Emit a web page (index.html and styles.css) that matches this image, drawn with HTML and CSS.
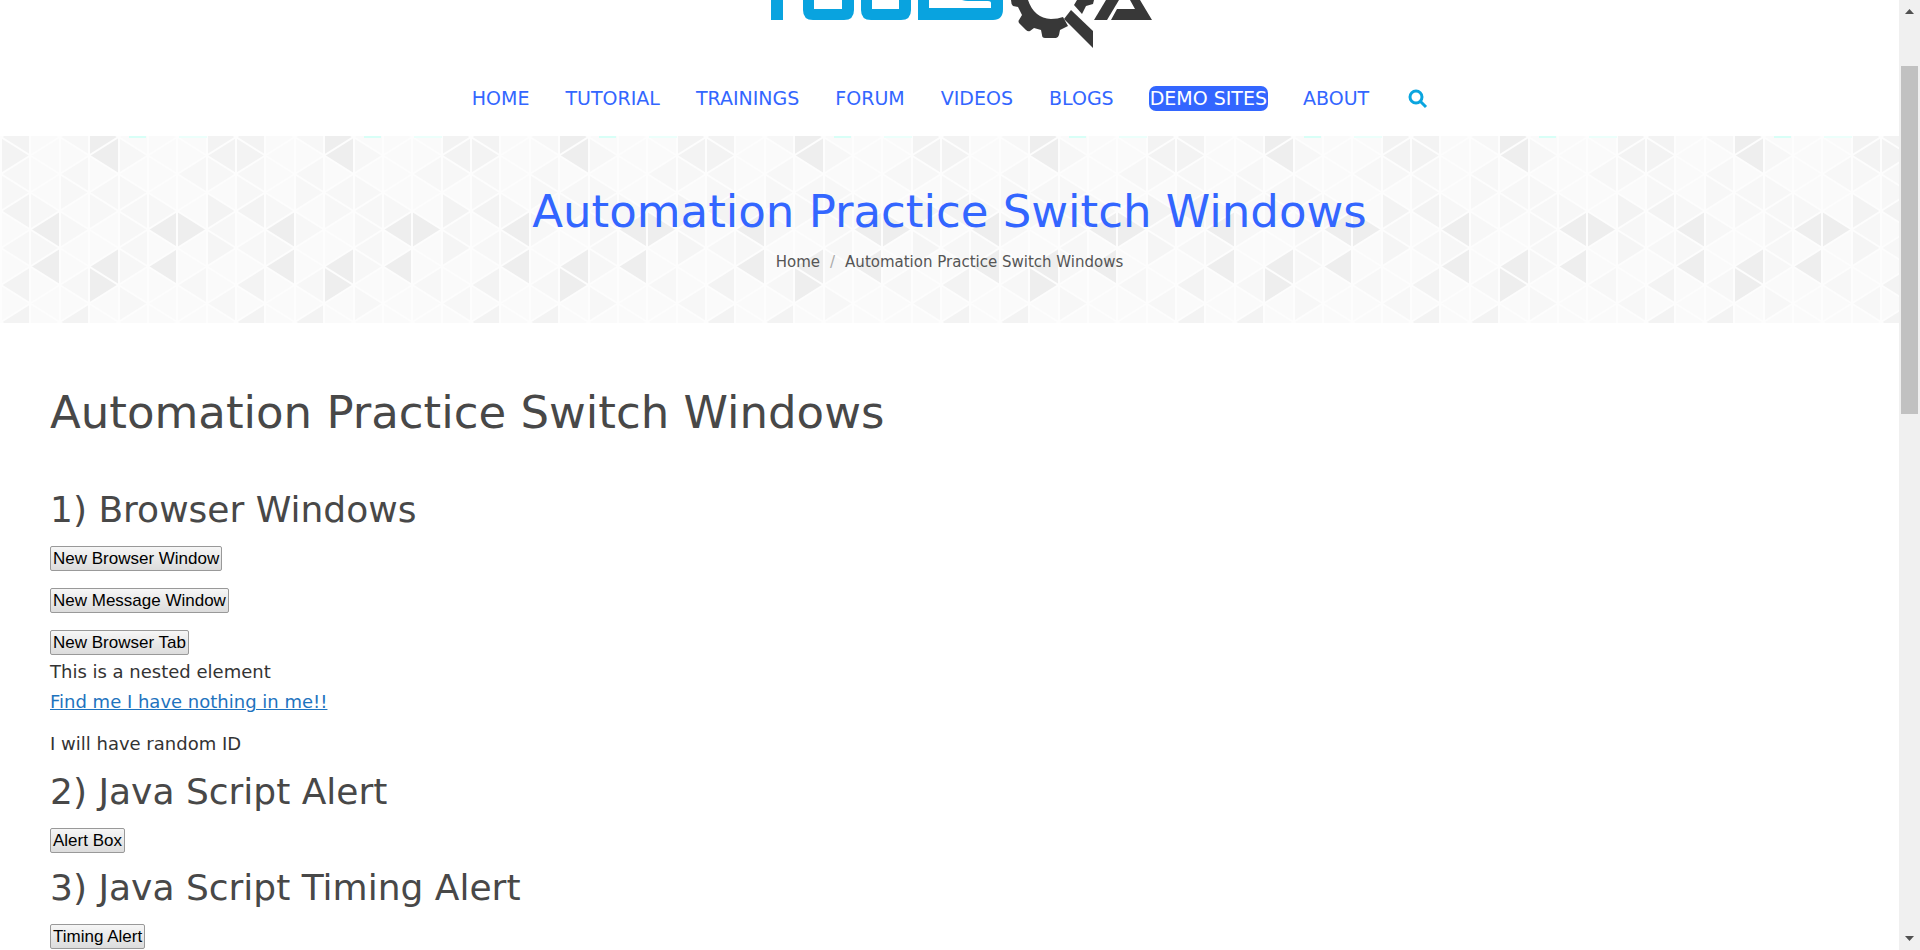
FILE: index.html
```html
<!DOCTYPE html>
<html lang="en">
<head>
<meta charset="utf-8">
<title>Automation Practice Switch Windows</title>
<link rel="stylesheet" href="styles.css">
</head>
<body>
<div class="page">
  <header class="site-header">
    <a class="logo" href="#" aria-label="ToolsQA">
      <svg width="400" height="60" viewBox="760 0 400 60" aria-hidden="true">
        <g fill="#09a3df">
          <rect x="771" y="0" width="12" height="20"/>
          <path d="M803 0h11v9h28v-9h12v10q0 10-10 10h-31q-10 0-10-10z"/>
          <path d="M861 0h11v9h27v-9h12v10q0 10-10 10h-30q-10 0-10-10z"/>
          <path d="M918 0h11v8h62v-5q0-2-3-2h-20q-3 0-6-1h41v9q0 11-10 11h-75z"/>
        </g>
        <g fill="#383838">
          <path d="M1011 0h17q6 18 23 19q7 0 12-2l5 9-8 4-1 5q-1 3-3 3h-11q-3 0-3-3l-1-5-7-2-4 3q-2 1-4-1l-7-7q-1-2 0-3l3-5-4-8-5-1q-2-2-2-6z"/>
          <path d="M1071 10l22 21v17l-29-29z"/>
          <path d="M1074 5l3-5h17l-1 4-7 2-4 8z"/>
          <path d="M1106 0h13l-12 20h-13z"/>
          <path d="M1130 0h10l12 20h-41l6-11h18z"/>
        </g>
      </svg>
    </a>
    <nav class="main-nav" aria-label="Main">
      <a class="nav-link" href="#">HOME</a>
      <a class="nav-link" href="#">TUTORIAL</a>
      <a class="nav-link" href="#">TRAININGS</a>
      <a class="nav-link" href="#">FORUM</a>
      <a class="nav-link" href="#">VIDEOS</a>
      <a class="nav-link" href="#">BLOGS</a>
      <a class="nav-link nav-link-active" href="#">DEMO SITES</a>
      <a class="nav-link" href="#">ABOUT</a>
      <button class="search" type="button" aria-label="Search">
        <svg width="20" height="20" viewBox="0 0 20 20" aria-hidden="true">
          <circle cx="8" cy="8" r="6" fill="none" stroke="#0aa5df" stroke-width="3"/>
          <path d="M12 12l6 6" stroke="#0aa5df" stroke-width="3"/>
        </svg>
      </button>
    </nav>
  </header>

  <section class="banner">
    <svg class="banner-pattern" width="100%" height="100%" aria-hidden="true">
      <defs>
        <pattern id="triangles" patternUnits="userSpaceOnUse" width="235" height="187" patternTransform="translate(1 0)">
          <rect width="235" height="187" fill="#fafafa"/>
          <g fill="#f7f7f7">
            <path d="M59 38L88 19.5V56.5zM59 38V75L88 56.5zM59 149L88 130.5V167.5zM59 75V112L88 93.5zM59 1L88 -17.5V19.5z"/>
            <path d="M88 56.5L118 38V75zM88 56.5V93.5L118 75zM118 1V38L147 19.5zM118 38V75L147 56.5zM118 75L147 56.5V93.5zM118 112L147 93.5V130.5zM118 112V149L147 130.5zM118 149V186L147 167.5zM118 75V112L147 93.5z"/>
            <path d="M147 56.5V93.5L176 75zM176 38L206 19.5V56.5zM176 149L206 130.5V167.5zM206 93.5L235 75V112zM206 167.5L235 149V186zM206 19.5V56.5L235 38zM0 38L29 19.5V56.5zM0 38V75L29 56.5zM0 112L29 93.5V130.5zM29 93.5V56.5L59 75zM29 130.5V93.5L59 112z"/>
          </g>
          <g fill="#f3f3f3">
            <path d="M0 1V38L29 19.5zM0 1L29 -17.5V19.5zM0 75L29 56.5V93.5zM0 149L29 130.5V167.5zM0 186L29 167.5V204.5zM59 186L88 167.5V204.5z"/>
            <path d="M206 19.5L235 1V38zM206 56.5V93.5L235 75zM206 -17.5V19.5L235 1z"/>
          </g>
          <path d="M206 93.5V130.5L235 112z" fill="#f5f5f5"/>
          <g fill="#eee">
            <path d="M29 93.5L59 75V112zM29 130.5L59 112V149zM88 19.5L118 1V38zM88 -17.5V19.5L118 1zM88 130.5L118 112V149zM88 130.5V167.5L118 149z"/>
            <path d="M147 93.5L176 75V112zM147 130.5L176 112V149zM176 75V112L206 93.5z"/>
          </g>
          <g fill="none" stroke="#fdfdfd" stroke-width="2">
            <path d="M0 0V187M29 0V187M59 0V187M88 0V187M118 0V187M147 0V187M176 0V187M206 0V187M235 0V187"/>
            <path d="M0 -147L235 1M0 -110L235 38M0 -73L235 75M0 -36L235 112M0 1L235 149M0 38L235 186M0 75L235 223M0 112L235 260M0 149L235 297M0 186L235 334"/>
            <path d="M0 1L235 -147M0 38L235 -110M0 75L235 -73M0 112L235 -36M0 149L235 1M0 186L235 38M0 223L235 75M0 260L235 112M0 297L235 149M0 334L235 186"/>
          </g>
          <rect x="128" width="17" height="2" fill="#d8fff7"/>
          <rect x="178" width="28" height="2" fill="#ecfffb"/>
        </pattern>
      </defs>
      <rect width="100%" height="100%" fill="url(#triangles)"/>
    </svg>
    <h1 class="banner-title">Automation Practice Switch Windows</h1>
    <nav class="crumbs" aria-label="Breadcrumb">
      <a class="crumb" href="#">Home</a>
      <span class="crumb-sep">/</span>
      <span class="crumb">Automation Practice Switch Windows</span>
    </nav>
  </section>

  <main class="content">
    <h1 class="title">Automation Practice Switch Windows</h1>
    <h2 class="section-title">1) Browser Windows</h2>
    <p class="row"><button class="btn" type="button">New Browser Window</button></p>
    <p class="row"><button class="btn" type="button">New Message Window</button></p>
    <p class="row row-tight"><button class="btn" type="button">New Browser Tab</button></p>
    <p class="row row-tight">This is a nested element</p>
    <p class="row"><a class="link" href="#">Find me I have nothing in me!!</a></p>
    <p class="row">I will have random ID</p>
    <h2 class="section-title">2) Java Script Alert</h2>
    <p class="row"><button class="btn" type="button">Alert Box</button></p>
    <h2 class="section-title">3) Java Script Timing Alert</h2>
    <p class="row"><button class="btn" type="button">Timing Alert</button></p>
  </main>
</div>
<div class="scrollbar" aria-hidden="true">
  <svg width="9" height="5" viewBox="0 0 18 10"><path d="M0 10L9 0L18 10z" fill="#505050"/></svg>
  <div class="track"><div class="thumb"></div></div>
  <svg width="9" height="5" viewBox="0 0 18 10"><path d="M0 0H18L9 10z" fill="#505050"/></svg>
</div>
</body>
</html>
```

FILE: styles.css
```css
* {
  box-sizing: border-box;
}

body {
  margin: 0;
  height: 100vh;
  display: flex;
  overflow: hidden;
  background: #fff;
  color: #333;
  font-family: Verdana, "DejaVu Sans", sans-serif;
  font-size: 18px;
  line-height: 30px;
}

.page {
  flex: 1;
  min-width: 0;
  overflow: hidden;
}

.site-header {
  display: flex;
  flex-direction: column;
  align-items: center;
}

.logo {
  display: flex;
  margin-left: 20px;
}

.main-nav {
  display: flex;
  align-items: center;
  gap: 34px;
  padding: 26px 0 25px;
  font-size: 19px;
  line-height: 25px;
}

.nav-link {
  padding: 0 1px;
  color: #36f;
  text-decoration: none;
}

.nav-link-active {
  border-radius: 7px;
  background: #36f;
  color: #fff;
}

.search {
  display: flex;
  margin-left: 4px;
  padding: 0;
  border: 0;
  background: none;
}

.banner {
  position: relative;
  padding: 46px 0 46px;
  text-align: center;
}

.banner-pattern {
  position: absolute;
  inset: 0;
  z-index: -1;
}

.banner-title {
  margin: 0;
  color: #36f;
  font-size: 45px;
  font-weight: 400;
  line-height: 60px;
}

.crumbs {
  display: flex;
  justify-content: center;
  gap: 10px;
  margin-top: 5px;
  font-size: 15px;
}

.crumb {
  color: #555;
  text-decoration: none;
}

.crumb-sep {
  color: #aaa;
}

.content {
  padding: 60px 50px 0;
}

.title {
  margin: 0 0 46px;
  color: #484848;
  font-size: 45px;
  font-weight: 400;
  line-height: 60px;
}

.section-title {
  margin: 0 0 12px;
  color: #484848;
  font-size: 36px;
  font-weight: 400;
  line-height: 42px;
}

.row {
  margin: 0 0 12px;
}

.row-tight {
  margin-bottom: 0;
}

.btn {
  height: 25px;
  padding: 0 2px;
  border: 1px solid #999;
  border-radius: 2px;
  background: linear-gradient(#f6f6f6, #dcdcdc);
  color: #000;
  font: 17px/23px "Liberation Sans", Arial, sans-serif;
}

.link {
  color: #1e73be;
}

.scrollbar {
  display: flex;
  flex-direction: column;
  align-items: center;
  width: 21px;
  padding: 9px 0;
  background: #f0f0f0;
}

.track {
  flex: 1;
  width: 17px;
  padding-top: 52px;
}

.thumb {
  height: 40%;
  background: #c1c1c1;
}
```
